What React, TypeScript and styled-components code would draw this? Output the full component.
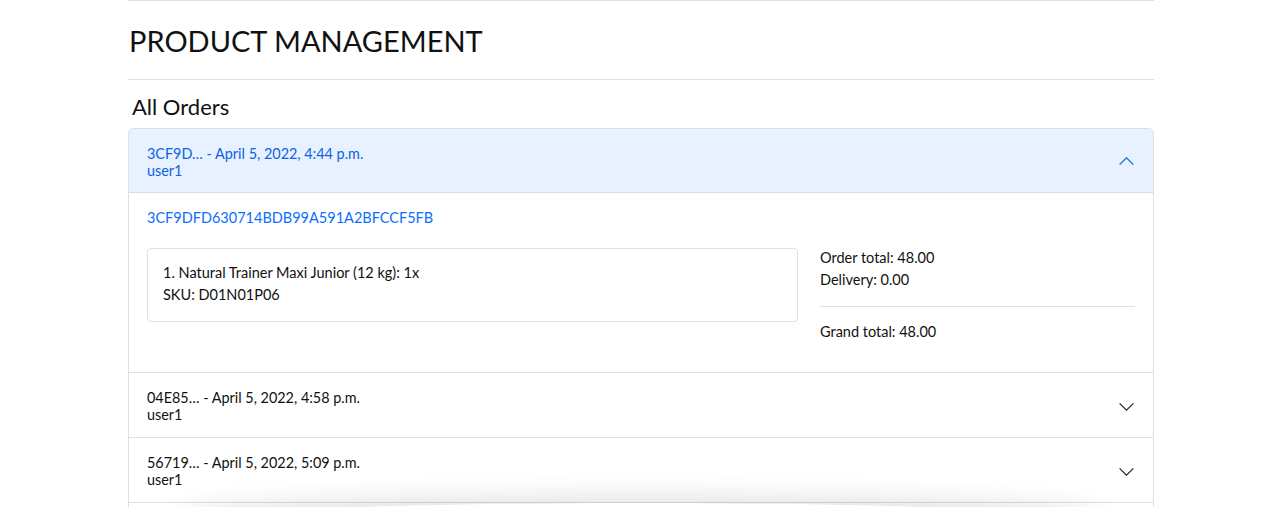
import React from "react";
import styled, { createGlobalStyle } from "styled-components";

const Global = createGlobalStyle`
  html, body { margin: 0; padding: 0; background: #fff; }
  body { font-family: Lato, "Open Sans", sans-serif; color: #212529; overflow: hidden; height: 507px; }
  * { box-sizing: border-box; }
`;

const Page = styled.div`
  width: 1026px;
  margin: 0 126px 0 128px;
  position: relative;
`;

const Rule = styled.hr`
  border: 0;
  border-top: 1px solid #dedede;
  margin: 0;
`;

const Title = styled.h1`
  font-size: 29px;
  font-weight: 400;
  line-height: 34px;
  margin: 0;
  padding: 23px 0 21px 1px;
  color: #111;
`;

const SubTitle = styled.h4`
  font-size: 22px;
  font-weight: 400;
  line-height: 26px;
  margin: 0;
  padding: 14px 0 8px 4px;
  color: #111;
`;

const Accordion = styled.div`
  border: 1px solid #dfdfdf;
  border-radius: 5px;
  overflow: hidden;
`;

const Item = styled.div`
  & + & { border-top: 1px solid #dfdfdf; }
`;

const Header = styled.div<{ $open?: boolean }>`
  height: 64px;
  padding: 2px 18px 0;
  display: flex;
  align-items: center;
  justify-content: space-between;
  background: ${(p) => (p.$open ? "#e7f1ff" : "#fff")};
  color: ${(p) => (p.$open ? "#0c63e4" : "#111")};
  border-bottom: ${(p) => (p.$open ? "1px solid #d6dde8" : "none")};
  font-size: 14.4px;
  line-height: 17px;
`;

const HeaderText = styled.div`
  display: flex;
  flex-direction: column;
`;

const Chevron = styled.svg`
  width: 17px;
  height: 17px;
`;

const Body = styled.div`
  padding: 16px 18px 29px;
  font-size: 14.5px;
  line-height: 22px;
  color: #111;
`;

const OrderId = styled.div`
  color: #0d6efd;
  line-height: 17px;
`;

const Row = styled.div`
  display: flex;
  gap: 22px;
  margin-top: 22px;
  align-items: flex-start;
`;

const ItemsCard = styled.div`
  width: 651px;
  border: 1px solid #dfdfdf;
  border-radius: 4px;
  padding: 13px 15px 15px;
`;

const Totals = styled.div`
  flex: 1;
  margin-top: -1px;
`;

const TotalsRule = styled.hr`
  border: 0;
  border-top: 1px solid #dfdfdf;
  margin: 15px 0 14px;
`;

const Shade = styled.div`
  position: absolute;
  left: 50px;
  right: 50px;
  top: 503px;
  height: 40px;
  border-radius: 50%;
  box-shadow: 0 -6px 26px rgba(0, 0, 0, 0.12);
  pointer-events: none;
`;

const ChevronIcon = ({ up, color }: { up?: boolean; color: string }) => (
  <Chevron viewBox="0 0 16 16" fill="none">
    <path
      d={up ? "M1.5 11 L8 4.5 L14.5 11" : "M1.5 5 L8 11.5 L14.5 5"}
      stroke={color}
      strokeWidth="1.1"
    />
  </Chevron>
);

const orders = [
  { short: "04E85…", date: "April 5, 2022, 4:58 p.m." },
  { short: "56719…", date: "April 5, 2022, 5:09 p.m." },
];

export default function App() {
  return (
    <>
      <Global />
      <Page>
        <Rule />
        <Title>PRODUCT MANAGEMENT</Title>
        <Rule />
        <SubTitle>All Orders</SubTitle>
        <Accordion>
          <Item>
            <Header $open>
              <HeaderText>
                <span>3CF9D… - April 5, 2022, 4:44 p.m.</span>
                <span>user1</span>
              </HeaderText>
              <ChevronIcon up color="#0c63e4" />
            </Header>
            <Body>
              <OrderId>3CF9DFD630714BDB99A591A2BFCCF5FB</OrderId>
              <Row>
                <ItemsCard>
                  <div>1. Natural Trainer Maxi Junior (12 kg): 1x</div>
                  <div>SKU: D01N01P06</div>
                </ItemsCard>
                <Totals>
                  <div>Order total: 48.00</div>
                  <div>Delivery: 0.00</div>
                  <TotalsRule />
                  <div>Grand total: 48.00</div>
                </Totals>
              </Row>
            </Body>
          </Item>
          {orders.map((o) => (
            <Item key={o.short}>
              <Header>
                <HeaderText>
                  <span>
                    {o.short} - {o.date}
                  </span>
                  <span>user1</span>
                </HeaderText>
                <ChevronIcon color="#222" />
              </Header>
            </Item>
          ))}
          <Item>
            <Header />
          </Item>
        </Accordion>
        <Shade />
      </Page>
    </>
  );
}
